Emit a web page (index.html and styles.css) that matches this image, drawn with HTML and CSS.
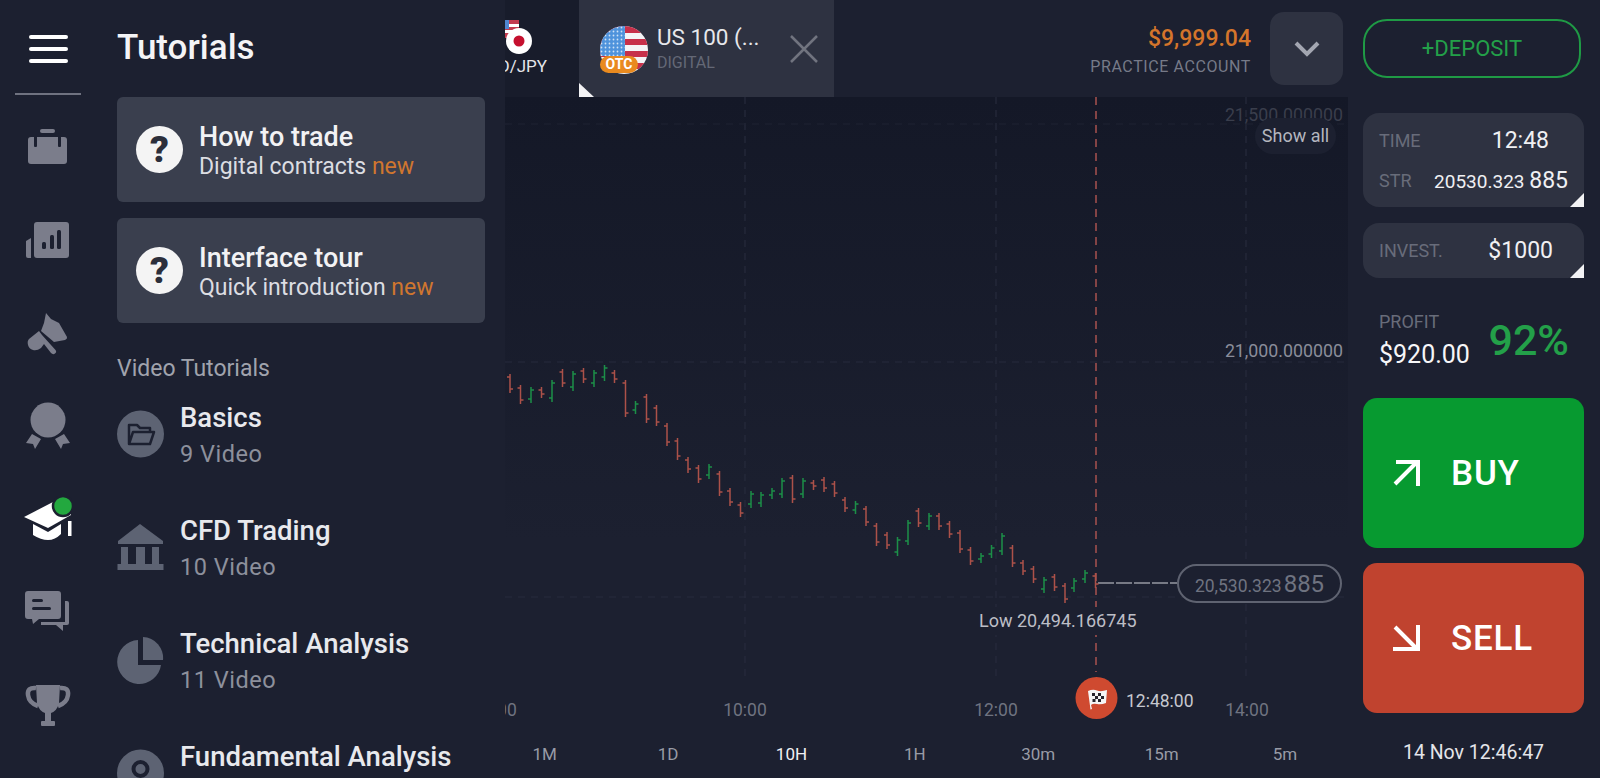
FILE: index.html
```html
<!DOCTYPE html>
<html lang="en">
<head>
    <meta charset="UTF-8">
    <meta name="viewport" content="width=device-width, initial-scale=1.0">
    <title>Tutorials</title>
    <link rel="stylesheet" href="styles.css">
</head>
<body>

    <div class="app">

        <!-- Left icon rail -->
        <nav class="rail">
            <div class="burger"><span></span><span></span><span></span></div>
            <div class="rail-line"></div>
            <div class="rail-item">
                <svg width="40" height="36" viewBox="0 0 40 36"><rect x="12" y="0" width="15" height="4" rx="2" fill="#7b7d8b"/><rect x="0" y="8" width="39" height="27" rx="3" fill="#7b7d8b"/><rect x="6" y="6" width="3" height="12" rx="1" fill="#1c2030"/><rect x="30" y="6" width="3" height="12" rx="1" fill="#1c2030"/></svg>
            </div>
            <div class="rail-item">
                <svg width="44" height="36" viewBox="0 0 44 36"><path d="M0 19l5-3v20H2a2 2 0 0 1-2-2z" fill="#7b7d8b"/><rect x="8" y="0" width="35" height="36" rx="3" fill="#7b7d8b"/><rect x="16" y="20" width="4" height="7" rx="1.5" fill="#1c2030"/><rect x="24" y="13" width="4" height="14" rx="1.5" fill="#1c2030"/><rect x="31" y="8" width="4" height="19" rx="1.5" fill="#1c2030"/></svg>
            </div>
            <div class="rail-item">
                <svg width="42" height="44" viewBox="0 0 42 44"><path d="M19 2l5 6 8 4 8 14q.5 2-2 3l-11 2-13-11 3-8z" fill="#7b7d8b"/><path d="M12 20L2 28q-2 2-1 6 1 4 5 5 4 1 8-2l3-4 7 9q2 2 4 .5 2-1.500 .5-3.500L15 24z" fill="#7b7d8b"/></svg>
            </div>
            <div class="rail-item">
                <svg width="46" height="48" viewBox="0 0 46 48"><circle cx="23" cy="18" r="17.500" fill="#7b7d8b"/><path d="M1 41l6-9 9 5-6 10-2-5zM45 41l-6-9-9 5 6 10 2-5z" fill="#7b7d8b"/></svg>
            </div>
            <div class="rail-item">
                <svg width="48" height="46" viewBox="0 0 48 46"><path d="M0 21L29 6l18 7v6L24 32z" fill="#fff"/><path d="M9 28l15 8 13-8v10q-6 6-13 6T9 39z" fill="#fff"/><rect x="44" y="25" width="3.500" height="15" fill="#fff"/><circle cx="39" cy="10" r="10" fill="#23a83f" stroke="#1c2030" stroke-width="2.500"/></svg>
            </div>
            <div class="rail-item">
                <svg width="46" height="42" viewBox="0 0 46 42"><path d="M3 0h30q3 0 3 3v22q0 3-3 3H14l-6 5-1-5H3q-3 0-3-3V3q0-3 3-3z" fill="#7b7d8b"/><rect x="7" y="8" width="11" height="3" rx="1.500" fill="#1c2030"/><rect x="7" y="16" width="19" height="3" rx="1.500" fill="#1c2030"/><path d="M40 10h2q2 0 2 2v20q0 2-2 2h-4v6l-7-6H16v-3h24z" fill="#7b7d8b"/></svg>
            </div>
            <div class="rail-item">
                <svg width="46" height="42" viewBox="0 0 46 42"><path d="M11 1h24l-1 18q-2 8-8 10v8h-6v-8q-6-2-8-10z" fill="#7b7d8b"/><path d="M11 4Q2 3 3 11q1 8 10 11M35 4q9-1 8 7-1 8-10 11" fill="none" stroke="#7b7d8b" stroke-width="4.500"/><rect x="16" y="37" width="14" height="5" rx="1" fill="#7b7d8b"/></svg>
            </div>
        </nav>

        <!-- Tutorials panel -->
        <aside class="panel">
            <h1 class="panel-title">Tutorials</h1>

            <div class="card">
                <div class="help">?</div>
                <div class="card-text">
                    <div class="card-title">How to trade</div>
                    <div class="card-sub">Digital contracts <span class="new">new</span></div>
                </div>
            </div>
            <div class="card">
                <div class="help">?</div>
                <div class="card-text">
                    <div class="card-title">Interface tour</div>
                    <div class="card-sub">Quick introduction <span class="new">new</span></div>
                </div>
            </div>

            <div class="section-label">Video Tutorials</div>

            <div class="lesson">
                <svg width="48" height="48" viewBox="0 0 48 48"><circle cx="23.500" cy="24" r="23.500" fill="#5d6373"/><path d="M12 34V15h8l3 3h10v4M12 34l4-12h21l-4 12z" fill="none" stroke="#1c2030" stroke-width="2.500" stroke-linejoin="round"/></svg>
                <div>
                    <div class="lesson-title">Basics</div>
                    <div class="lesson-sub">9 Video</div>
                </div>
            </div>
            <div class="lesson">
                <svg width="48" height="48" viewBox="0 0 48 48"><path d="M23 1L46 18v3H1v-3z" fill="#5d6373"/><rect x="4" y="24" width="7" height="17" fill="#5d6373"/><rect x="19" y="24" width="9" height="17" fill="#5d6373"/><rect x="35" y="24" width="7" height="17" fill="#5d6373"/><rect x="0.500" y="41" width="46" height="6" fill="#5d6373"/></svg>
                <div>
                    <div class="lesson-title">CFD Trading</div>
                    <div class="lesson-sub">10 Video</div>
                </div>
            </div>
            <div class="lesson">
                <svg width="48" height="48" viewBox="0 0 48 48"><path d="M21 4v25h23A22 22 0 1 1 21 4z" fill="#5d6373"/><path d="M26 1a21 21 0 0 1 20 23H26z" fill="#5d6373"/></svg>
                <div>
                    <div class="lesson-title">Technical Analysis</div>
                    <div class="lesson-sub">11 Video</div>
                </div>
            </div>
            <div class="lesson">
                <svg width="48" height="48" viewBox="0 0 48 48"><circle cx="23.500" cy="24" r="23.500" fill="#5d6373"/><circle cx="23.500" cy="20" r="7" fill="none" stroke="#1c2030" stroke-width="4"/></svg>
                <div>
                    <div class="lesson-title">Fundamental Analysis</div>
                </div>
            </div>
        </aside>

        <!-- Chart column -->
        <main class="main">
            <header class="topbar">
                <div class="tab-prev">
                    <div class="tab-prev-inner">
                        <svg class="prev-flag" width="30" height="34" viewBox="0 0 30 34"><rect x="0" y="0" width="16" height="18" fill="#c23b4f"/><rect x="0" y="4" width="16" height="3" fill="#fff"/><rect x="0" y="10" width="16" height="3" fill="#fff"/><rect x="0" y="0" width="6" height="9" fill="#4f86d0"/><circle cx="16" cy="21" r="13" fill="#fff"/><circle cx="16" cy="21" r="5.500" fill="#c5102e"/></svg>
                        <div class="prev-name">USD/JPY</div>
                    </div>
                </div>
                <div class="tab-active">
                    <div class="tab-flag">
                        <svg width="48" height="48" viewBox="0 0 48 48">
                            <defs>
                                <clipPath id="flagClip"><circle cx="24" cy="24" r="24"/></clipPath>
                                <pattern id="stars" width="4" height="4" patternUnits="userSpaceOnUse"><rect width="4" height="4" fill="#4f93dc"/><circle cx="1.500" cy="1.500" r="0.900" fill="#cfe3f7"/></pattern>
                            </defs>
                            <g clip-path="url(#flagClip)">
                                <rect width="48" height="48" fill="#f4f4f6"/>
                                <rect y="0" width="48" height="7" fill="#c7304a"/>
                                <rect y="13" width="48" height="6" fill="#c7304a"/>
                                <rect y="25" width="48" height="6" fill="#c7304a"/>
                                <rect y="37" width="48" height="6" fill="#c7304a"/>
                                <rect width="25" height="30" fill="url(#stars)"/>
                            </g>
                        </svg>
                        <span class="otc">OTC</span>
                    </div>
                    <div class="tab-text">
                        <div class="tab-name">US 100 (...</div>
                        <div class="tab-type">DIGITAL</div>
                    </div>
                    <svg class="tab-close" width="28" height="28" viewBox="0 0 28 28"><path d="M1 1l26 26M27 1L1 27" stroke="#71747f" stroke-width="2.500"/></svg>
                    <span class="tab-corner"></span>
                </div>
                <div class="balance">
                    <div class="balance-value">$9,999.04</div>
                    <div class="balance-label">PRACTICE ACCOUNT</div>
                </div>
                <div class="dropdown">
                    <svg width="26" height="16" viewBox="0 0 26 16"><path d="M2 2l11 11L24 2" fill="none" stroke="#a3a6b1" stroke-width="4"/></svg>
                </div>
            </header>

            <section class="chart">
                <svg class="chart-svg" width="843" height="633" viewBox="505 97 843 633">
                    <g stroke="#272b3c" stroke-width="1.200" stroke-dasharray="7 6" fill="none">
                        <path d="M505 362H1348M505 597H1348"/>
                        <path d="M745 97V678M996 97V678M1246 97V678"/>
                    </g>
                    <path d="M505 124H1348" stroke="#1f2333" stroke-width="1.200" stroke-dasharray="7 6"/>
                    <path d="M1096 97V672" stroke="#a8524f" stroke-width="1.500" stroke-dasharray="8 6"/>
                    <path d="M1098 583H1177" stroke="#777a85" stroke-width="2" stroke-dasharray="16 2"/>
                    <path fill="none" stroke="#ac5149" stroke-width="1.500" d="M510 374v19m0-4h3m-6-12h3M520.500 385v19m0-4h3m-6-12h3M541.500 387v11m0-4h3m-6-4h3M562.500 369v18m0-4h3m-6-11h3M583.500 368v15m0-4h3m-6-8h3M614.500 370v13m0-4h3m-6-6h3M625.500 380v37m0-4h3m-6-30h3M646.500 394v29m0-4h3m-6-22h3M656.500 405v21m0-4h3m-6-14h3M667 423v23m0-4h3m-6-16h3M677.500 438v22m0-4h3m-6-15h3M688 457v16m0-4h3m-6-9h3M698.500 465v18m0-4h3m-6-11h3M719.500 471v25m0-4h3m-6-18h3M730 488v18m0-4h3m-6-11h3M740.500 502v15m0-4h3m-6-8h3M792.500 475v28m0-4h3m-6-21h3M813.500 480v10m0-4h3m-6-3h3M824 477v15m0-4h3m-6-8h3M834.500 481v16m0-4h3m-6-9h3M845 497v15m0-4h3m-6-8h3M866 506v20m0-4h3m-6-13h3M876.500 523v23m0-4h3m-6-16h3M887 532v17m0-4h3m-6-10h3M918.500 508v19m0-4h3m-6-12h3M939 513v17m0-4h3m-6-10h3M949.500 521v17m0-4h3m-6-10h3M960 530v23m0-4h3m-6-16h3M970.500 547v18m0-4h3m-6-11h3M1012.500 545v22m0-4h3m-6-15h3M1023 560v15m0-4h3m-6-8h3M1033.500 566v17m0-4h3m-6-10h3M1054.500 574v17m0-4h3m-6-10h3M1065 583v20m0-4h3m-6-13h3M1095.500 573v15m0-4h3m-6-8h3"/>
                    <path fill="none" stroke="#1c8f48" stroke-width="1.500" d="M531 387v16m0-13h3m-6 9h3M552 380v22m0-19h3m-6 15h3M573 371v20m0-17h3m-6 13h3M594 370v17m0-14h3m-6 10h3M604.500 365v16m0-13h3m-6 9h3M635.500 401v13m0-10h3m-6 6h3M709 464v15m0-12h3m-6 8h3M751 491v17m0-14h3m-6 10h3M761 492v15m0-12h3m-6 8h3M772 488v11m0-8h3m-6 4h3M782 478v20m0-17h3m-6 13h3M803 478v20m0-17h3m-6 13h3M855.500 501v13m0-10h3m-6 6h3M897.500 537v19m0-16h3m-6 12h3M908 520v25m0-22h3m-6 18h3M929 513v17m0-14h3m-6 10h3M981 553v10m0-7h3m-6 3h3M991.500 545v13m0-10h3m-6 6h3M1002 533v22m0-19h3m-6 15h3M1044 577v16m0-13h3m-6 9h3M1074 578v14m0-11h3m-6 7h3M1085 570v13m0-10h3m-6 6h3"/>
                    <circle cx="1096.500" cy="698" r="21" fill="#cf4a30"/>
                    <path d="M1088 691q5-2 9-.500t10-.500l-1 13q-5 2-9 1t-6 1l1 4-1.500 .500z" fill="#f5f5f5"/>
                    <path d="M1092 693h3v3h-3zM1098 693h3v3h-3zM1095 696h3v3h-3zM1101 696h3v3h-3zM1092.500 699h3v3h-3zM1098 699h3v3h-3z" fill="#26242c"/>
                </svg>

                <span class="axis-y axis-dim">21,500.000000</span>
                <span class="axis-y axis-mid">21,000.000000</span>
                <span class="show-all">Show all</span>
                <span class="low-label">Low 20,494.166745</span>
                <div class="price-tag">20,530.323<span class="price-tail">885</span></div>
                <span class="axis-x axis-x-08">08:00</span>
                <span class="axis-x axis-x-10">10:00</span>
                <span class="axis-x axis-x-12">12:00</span>
                <span class="axis-x axis-x-14">14:00</span>
                <span class="expiry">12:48:00</span>
            </section>

            <footer class="ranges">
                <span>1M</span><span>1D</span><span class="on">10H</span><span>1H</span><span>30m</span><span>15m</span><span>5m</span>
            </footer>
        </main>

        <!-- Trade column -->
        <aside class="side">
            <div class="deposit">+DEPOSIT</div>

            <div class="box box-time">
                <div class="box-row">
                    <span class="box-label">TIME</span>
                    <span class="box-value time-value">12:48</span>
                </div>
                <div class="box-row">
                    <span class="box-label">STR</span>
                    <span class="strike">20530.323 <span class="box-value">885</span></span>
                </div>
                <span class="box-corner"></span>
            </div>

            <div class="box box-invest">
                <div class="box-row">
                    <span class="box-label">INVEST.</span>
                    <span class="box-value invest-value">$1000</span>
                </div>
                <span class="box-corner"></span>
            </div>

            <div class="profit">
                <div>
                    <div class="box-label">PROFIT</div>
                    <div class="profit-value">$920.00</div>
                </div>
                <div class="profit-pct">92%</div>
            </div>

            <div class="trade trade-buy">
                <svg width="28" height="28" viewBox="0 0 28 28"><path d="M3 25L25 3M4 3h22v24" fill="none" stroke="#fff" stroke-width="4"/></svg>
                <span>BUY</span>
            </div>
            <div class="trade trade-sell">
                <svg width="28" height="28" viewBox="0 0 28 28"><path d="M3 3l22 22M1 25h25V1" fill="none" stroke="#fff" stroke-width="4"/></svg>
                <span>SELL</span>
            </div>

            <div class="clock">14 Nov 12:46:47</div>
        </aside>

    </div>

</body>
</html>
```
FILE: styles.css
```css
* {
    box-sizing: border-box;
}

body {
    margin: 0;
    font-family: Roboto, "Liberation Sans", sans-serif;
    background-color: #1c2030;
    color: #fff;
}

.app {
    display: flex;
    height: 100vh;
    overflow: hidden;
}

/* Left rail */
.rail {
    width: 100px;
    flex-shrink: 0;
    display: flex;
    flex-direction: column;
    padding-left: 15px;
    padding-right: 19px;
}

.burger {
    height: 93px;
    padding: 35px 0 0 14px;
}

.burger span {
    display: block;
    width: 39px;
    height: 4px;
    margin-bottom: 8px;
    background-color: #fff;
    border-radius: 2px;
}

.rail-line {
    height: 2px;
    background-color: #6f7280;
    margin-bottom: 5px;
}

.rail-item {
    height: 93px;
    display: flex;
    align-items: center;
    justify-content: center;
    flex-shrink: 0;
}

/* Tutorials panel */
.panel {
    width: 405px;
    flex-shrink: 0;
    padding: 0 20px 0 17px;
    overflow: hidden;
}

.panel-title {
    height: 97px;
    margin: 0;
    font-size: 35px;
    font-weight: 500;
    line-height: 96px;
    color: #f4f4f6;
}

.card {
    display: flex;
    align-items: center;
    gap: 16px;
    height: 105px;
    margin-bottom: 16px;
    padding-left: 19px;
    background-color: #3a3f4e;
    border-radius: 6px;
}

.card-text {
    margin-top: 3px;
}

.help {
    width: 47px;
    height: 47px;
    border-radius: 50%;
    background-color: #f4f4f4;
    color: #2c2f3b;
    font-size: 37px;
    font-weight: 900;
    line-height: 47px;
    text-align: center;
}

.card-title {
    font-size: 27px;
    font-weight: 500;
    line-height: 30px;
    color: #f2f2f4;
}

.card-sub {
    font-size: 23px;
    line-height: 29px;
    color: #dcdde2;
}

.new {
    color: #cf762f;
}

.section-label {
    margin-top: 31px;
    margin-bottom: 6px;
    font-size: 23px;
    line-height: 30px;
    color: #a0a3ad;
}

.lesson {
    display: flex;
    align-items: flex-start;
    gap: 15px;
    height: 113px;
    padding-top: 11px;
}

.lesson svg {
    flex-shrink: 0;
    margin-top: 9px;
}

.lesson-title {
    font-size: 27.500px;
    font-weight: 500;
    line-height: 34px;
    color: #e8e9ed;
}

.lesson-sub {
    margin-top: 1px;
    font-size: 23.500px;
    letter-spacing: 0.5px;
    line-height: 36px;
    color: #8d909c;
}

/* Chart column */
.main {
    width: 843px;
    flex-shrink: 0;
    display: flex;
    flex-direction: column;
}

.topbar {
    height: 97px;
    flex-shrink: 0;
    display: flex;
    align-items: stretch;
}

.tab-prev {
    width: 74px;
    display: flex;
    justify-content: flex-end;
    overflow: hidden;
    background-color: #181c2b;
    padding-right: 32px;
}

.tab-prev-inner {
    flex-shrink: 0;
    text-align: right;
    padding-top: 20px;
}

.prev-flag {
    display: block;
    margin-left: auto;
    margin-right: 14px;
}

.prev-name {
    margin-top: 2px;
    font-size: 17px;
    line-height: 20px;
    color: #e4e5ea;
}

.tab-active {
    position: relative;
    width: 255px;
    display: flex;
    align-items: flex-start;
    padding: 26px 0 0 21px;
    background-color: #2e3241;
}

.tab-flag {
    position: relative;
    width: 48px;
    height: 48px;
    flex-shrink: 0;
}

.otc {
    position: absolute;
    left: 0;
    bottom: 1px;
    width: 38px;
    height: 17px;
    border-radius: 9px;
    background-color: #e98a1f;
    font-size: 14px;
    font-weight: 700;
    line-height: 17px;
    text-align: center;
}

.tab-text {
    margin-left: 9px;
    width: 129px;
}

.tab-name {
    font-size: 22.500px;
    line-height: 24px;
    color: #e6e7eb;
    margin-top: -1px;
}

.tab-type {
    margin-top: 4px;
    font-size: 16px;
    line-height: 20px;
    color: #646876;
}

.tab-close {
    margin-top: 9px;
    margin-left: 4px;
}

.tab-corner {
    position: absolute;
    left: 0;
    bottom: 0;
    width: 15px;
    height: 14px;
    background-color: #f2f2f4;
    clip-path: polygon(0 0, 100% 100%, 0 100%);
}

.balance {
    width: 436px;
    padding-top: 25px;
    text-align: right;
    padding-right: 19px;
}

.balance-value {
    font-size: 23px;
    font-weight: 500;
    line-height: 27px;
    color: #d4752b;
}

.balance-label {
    margin-top: 4px;
    font-size: 16px;
    letter-spacing: 0.6px;
    line-height: 22px;
    color: #767a88;
}

.dropdown {
    width: 73px;
    height: 73px;
    margin-top: 12px;
    display: flex;
    align-items: center;
    justify-content: center;
    background-color: #2e3241;
    border-radius: 14px;
}

.chart {
    position: relative;
    flex: 1;
    overflow: hidden;
    background: linear-gradient(#141827, #1c2030 70%);
}

.chart-svg {
    position: absolute;
    left: 0;
    top: 0;
}

.axis-y {
    position: absolute;
    right: 5px;
    font-size: 17.800px;
    line-height: 20px;
}

.axis-dim {
    top: 8px;
    color: #3a3e4c;
}

.axis-mid {
    top: 244px;
    color: #8a8d9a;
}

.show-all {
    position: absolute;
    left: 750px;
    top: 21px;
    width: 81px;
    height: 36px;
    border-radius: 18px;
    background-color: #1c2030;
    color: #b4b6bf;
    font-size: 18px;
    line-height: 35px;
    text-align: center;
}

.low-label {
    position: absolute;
    left: 469px;
    top: 510px;
    padding: 3px 5px;
    background-color: #1c2030;
    color: #bcbec6;
    font-size: 18px;
    line-height: 22px;
}

.price-tag {
    position: absolute;
    left: 672px;
    top: 467px;
    width: 165px;
    height: 39px;
    border: 2px solid #5f6371;
    border-radius: 20px;
    background-color: #1c2030;
    color: #6f7380;
    font-size: 17.500px;
    line-height: 37px;
    text-align: center;
}

.price-tail {
    margin-left: 2px;
    font-size: 24px;
}

.axis-x {
    position: absolute;
    top: 603px;
    width: 60px;
    color: #6f7380;
    font-size: 17.500px;
    line-height: 20px;
    text-align: center;
}

.axis-x-08 {
    left: -40px;
}

.axis-x-10 {
    left: 210px;
}

.axis-x-12 {
    left: 461px;
}

.axis-x-14 {
    left: 712px;
}

.expiry {
    position: absolute;
    left: 621px;
    top: 594px;
    color: #c6c8cf;
    font-size: 17.500px;
    line-height: 20px;
}

.ranges {
    height: 48px;
    flex-shrink: 0;
    display: grid;
    grid-template-columns: repeat(7, 123.400px);
    margin-left: -22px;
    align-items: center;
    text-align: center;
    font-size: 17px;
    color: #989ba6;
}

.ranges .on {
    color: #f0f0f3;
}

/* Trade column */
.side {
    width: 252px;
    flex-shrink: 0;
    padding: 19px 16px 0 15px;
}

.deposit {
    width: 218px;
    height: 59px;
    border: 2px solid #1f9a45;
    border-radius: 24px;
    color: #23a049;
    font-size: 22px;
    line-height: 55px;
    text-align: center;
}

.box {
    position: relative;
    background-color: #2e3241;
    border-radius: 16px;
}

.box-time {
    height: 94px;
    margin-top: 35px;
    padding: 7px 16px 0;
}

.box-invest {
    height: 55px;
    margin-top: 16px;
    padding: 7px 16px 0;
}

.box-row {
    display: flex;
    align-items: center;
    justify-content: space-between;
    height: 40px;
}

.box-label {
    font-size: 18px;
    color: #686c7a;
}

.box-value {
    font-size: 23px;
    color: #f0f0f3;
}

.time-value {
    margin-right: 19px;
}

.invest-value {
    margin-right: 15px;
}

.strike {
    font-size: 19px;
    color: #f0f0f3;
    margin-right: 0;
}

.box-corner {
    position: absolute;
    right: 0;
    bottom: 0;
    width: 14px;
    height: 14px;
    background-color: #f2f2f4;
    clip-path: polygon(100% 0, 100% 100%, 0 100%);
}

.profit {
    display: flex;
    justify-content: space-between;
    align-items: center;
    height: 120px;
    padding: 4px 15px 0 16px;
}

.profit .box-label {
    line-height: 22px;
}

.profit-value {
    margin-top: 7px;
    font-size: 25px;
    line-height: 30px;
    color: #f6f6f8;
}

.profit-pct {
    margin-bottom: 0;
    font-size: 43px;
    font-weight: 500;
    line-height: 50px;
    color: #23a049;
}

.trade {
    display: flex;
    align-items: center;
    gap: 31px;
    height: 150px;
    padding-left: 29px;
    border-radius: 14px;
    font-size: 35px;
    font-weight: 500;
    letter-spacing: 0.8px;
}

.trade-buy {
    background-color: #079a30;
}

.trade-sell {
    margin-top: 15px;
    background-color: #c0432f;
}

.clock {
    height: 65px;
    color: #e4e5ea;
    font-size: 19.500px;
    line-height: 80px;
    text-align: center;
}
```
